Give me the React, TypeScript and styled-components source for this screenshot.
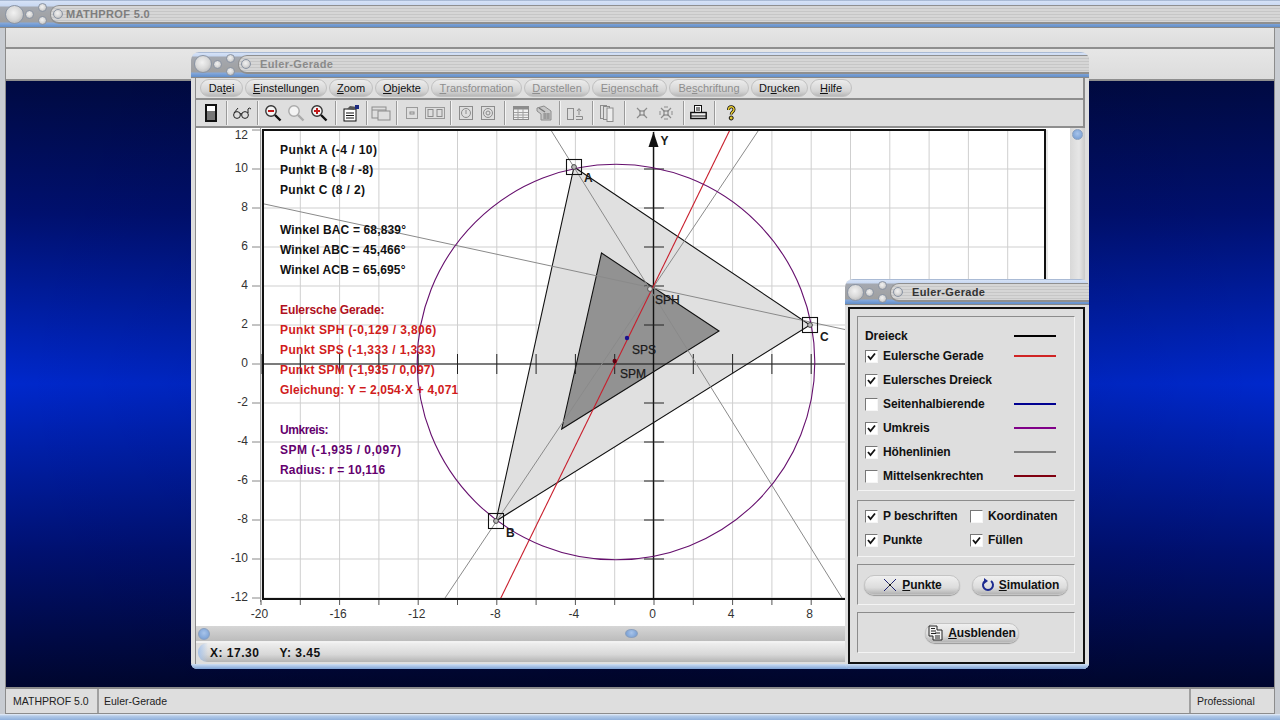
import React from "react";
import styled, { createGlobalStyle } from "styled-components";

const GlobalStyle = createGlobalStyle`
  html, body { margin: 0; padding: 0; background: #000; }
  body { font-family: "Liberation Sans", Arial, sans-serif; color: #000; }
`;

const PX = (x: number) => 654 + x * 19.65;
const PY = (y: number) => 364 - y * 19.5;

const MENU = [
  { pre: "Da", key: "t", post: "ei", w: 43 },
  { pre: "", key: "E", post: "instellungen", w: 82 },
  { pre: "", key: "Z", post: "oom", w: 44 },
  { pre: "", key: "O", post: "bjekte", w: 54 },
  { pre: "", key: "T", post: "ransformation", w: 91, off: true },
  { pre: "", key: "D", post: "arstellen", w: 66, off: true },
  { pre: "Ei", key: "g", post: "enschaft", w: 75, off: true },
  { pre: "Be", key: "s", post: "chriftung", w: 80, off: true },
  { pre: "Dr", key: "u", post: "cken", w: 57 },
  { pre: "", key: "H", post: "ilfe", w: 42 },
];

const Root = styled.div`
  position: relative;
  width: 1280px;
  height: 720px;
  overflow: hidden;
  display: flex;
  flex-direction: column;
  background: #c8ccd2;
`;

const TitleBarBox = styled.div<{ $h: number; $pad: number; $radius: number; $shift: number }>`
  flex: none;
  height: ${p => p.$h}px;
  display: flex;
  align-items: center;
  padding-left: ${p => p.$pad}px;
  border-radius: ${p => p.$radius}px ${p => p.$radius}px 0 0;
  background: linear-gradient(
    to bottom,
    #7d93b4 0,
    #d6e2f6 1px,
    #c8d8f2 ${p => p.$h - 22}px,
    #a4a8b0 ${p => p.$h - 21}px,
    #a0a0a0 ${p => p.$h - 6}px,
    #84a8dc ${p => p.$h - 5}px,
    #628ec8 ${p => p.$h - 1}px,
    #888 ${p => p.$h - 1}px
  );
  & > * { margin-top: ${p => p.$shift}px; }
`;

const Orb = styled.span<{ $size: number }>`
  flex: none;
  display: block;
  width: ${p => p.$size}px;
  height: ${p => p.$size}px;
  border-radius: 50%;
  border: 1px solid #8a94a4;
  box-sizing: border-box;
  background: radial-gradient(circle at 45% 40%, #f2f2f2 0, #d8d8d8 50%, #a8a8a8 100%);
`;

const SmallOrb = styled(Orb)`
  margin-left: 1px;
`;

const OrbPair = styled.span`
  flex: none;
  display: flex;
  flex-direction: column;
  gap: 4px;
  margin: 0 -1px 0 4px;
`;

const Strip = styled.div`
  flex: 1;
  height: 16px;
  margin-left: 4px;
  display: flex;
  align-items: center;
  gap: 3px;
  padding-left: 2px;
  border-radius: 9px 0 0 9px;
  border: 1px solid #8f8f8f;
  border-width: 1px 0 2px 1px;
  background: repeating-linear-gradient(to bottom, #d6d6d6 0, #d6d6d6 2px, #c6c6c6 2px, #c6c6c6 3px);
`;

const StripTitle = styled.span<{ $color: string; $gap: number }>`
  font-size: 11px;
  font-weight: 700;
  letter-spacing: 0.35px;
  white-space: nowrap;
  color: ${p => p.$color};
  margin-left: ${p => p.$gap}px;
`;

const TitleBar = ({ title, color, h, pad, radius, gap, big, shift }: { title: string; color: string; h: number; pad: number; radius: number; gap: number; big: number; shift: number }) => (
  <TitleBarBox $h={h} $pad={pad} $radius={radius} $shift={shift}>
    <Orb $size={big} />
    <SmallOrb $size={9} />
    <OrbPair>
      <Orb $size={9} />
      <Orb $size={9} />
    </OrbPair>
    <Strip>
      <Orb $size={10} />
      <StripTitle $color={color} $gap={gap}>{title}</StripTitle>
    </Strip>
  </TitleBarBox>
);

const Band = styled.div<{ $h: number }>`
  flex: none;
  height: ${p => p.$h}px;
  margin: 0 5px;
  border-left: 1px solid #8c8c8c;
  border-right: 1px solid #8c8c8c;
  border-bottom: 2px solid #8e8e8e;
  background: linear-gradient(to bottom, #e6e6e6, #dcdcdc);
`;

const Desktop = styled.div`
  flex: 1;
  margin: 0 5px;
  border-left: 1px solid #8c8c8c;
  border-right: 1px solid #8c8c8c;
  background:
    linear-gradient(to right, rgba(0, 0, 20, 0) 0, rgba(0, 0, 20, 0.25) 50%, rgba(0, 0, 20, 0) 100%),
    linear-gradient(to bottom, #000a42 0, #001070 22%, #0028cc 50%, #001070 78%, #00062e 100%);
`;

const StatusBar = styled.div`
  flex: none;
  height: 24px;
  margin: 0 5px;
  display: flex;
  border: 1px solid #8c8c8c;
  border-width: 2px 1px 1px;
  background: #dedede;
  font-size: 10.5px;
  color: #222;
`;

const StatusCell = styled.div<{ $w?: number; $pad: number }>`
  ${p => (p.$w ? `width: ${p.$w}px; flex: none;` : "flex: 1;")}
  box-sizing: border-box;
  display: flex;
  align-items: center;
  padding-left: ${p => p.$pad}px;
  & + & { border-left: 2px solid #a0a0a0; }
`;

const BottomEdge = styled.div`
  flex: none;
  height: 6px;
  background: linear-gradient(to bottom, #e8eef8 0, #b4cbe8 2px, #8fb0dc 100%);
`;

const Win = styled.div<{ $l: number; $t: number; $w: number; $h: number }>`
  position: absolute;
  left: ${p => p.$l}px;
  top: ${p => p.$t}px;
  width: ${p => p.$w}px;
  height: ${p => p.$h}px;
  display: flex;
  flex-direction: column;
  box-sizing: border-box;
  background: #dedede;
  border-radius: 8px 8px 6px 6px;
  overflow: hidden;
`;

const WinBody = styled.div`
  flex: 1;
  min-height: 0;
  display: flex;
  flex-direction: column;
  margin: 0 4px;
  border-left: 1px solid #8c8c8c;
  border-right: 2px solid #8c8c8c;
`;

const WinFoot = styled.div`
  flex: none;
  height: 5px;
  background: linear-gradient(to bottom, #cfdff4, #7fa3d6);
`;

const MenuRow = styled.div`
  flex: none;
  height: 20px;
  display: flex;
  align-items: center;
  padding-left: 4px;
  gap: 2px;
  border-bottom: 2px solid #8e8e8e;
  background: #e0e0e0;
`;

const MenuItem = styled.div<{ $w: number; $off?: boolean }>`
  flex: none;
  box-sizing: border-box;
  width: ${p => p.$w}px;
  height: 18px;
  display: flex;
  align-items: center;
  justify-content: center;
  border-radius: 9px;
  border: 1px solid #c0c0c0;
  background: linear-gradient(to bottom, #ececec, #d4d4d4 70%, #b8b8b8);
  font-size: 11px;
  white-space: nowrap;
  color: ${p => (p.$off ? "#8e8e8e" : "#111")};
`;

const ToolRow = styled.div`
  flex: none;
  height: 26px;
  display: flex;
  align-items: center;
  padding-left: 3px;
  border-bottom: 2px solid #8e8e8e;
  background: #dedede;
`;

const Tool = styled.div<{ $w: number }>`
  flex: none;
  width: ${p => p.$w}px;
  height: 22px;
  display: flex;
  align-items: center;
  justify-content: center;
  overflow: visible;
  & svg { flex: none; }
`;

const Sep = styled.div<{ $w: number }>`
  flex: none;
  width: ${p => p.$w}px;
  height: 24px;
  display: flex;
  justify-content: center;
  &::before {
    content: "";
    width: 1px;
    height: 100%;
    background: #9a9a9a;
    box-shadow: 1px 0 0 #f4f4f4;
  }
`;

const WorkRow = styled.div`
  flex: 1;
  min-height: 0;
  display: flex;
  background: #fff;
`;

const Chart = styled.svg`
  flex: none;
  display: block;
  font-family: "Liberation Sans", Arial, sans-serif;
`;

const VScroll = styled.div`
  flex: none;
  width: 15px;
  display: flex;
  justify-content: center;
  padding-top: 1px;
  background: linear-gradient(to right, #d8d8d8, #e6e6e6 60%, #cacaca);
`;

const Knob = styled.span<{ $w: number; $h: number }>`
  flex: none;
  display: block;
  width: ${p => p.$w}px;
  height: ${p => p.$h}px;
  border-radius: 50%;
  border: 1px solid #8aa0bf;
  box-sizing: border-box;
  background: radial-gradient(circle at 50% 40%, #a8c4ea 0, #6f98d0 100%);
`;

const HScroll = styled.div`
  flex: none;
  height: 15px;
  display: flex;
  align-items: center;
  padding-left: 2px;
  background: linear-gradient(to bottom, #d6d6d6, #bcbcbc);
  border-bottom: 2px solid #f2f2f2;
`;

const Spacer = styled.div<{ $w: number }>`
  flex: none;
  width: ${p => p.$w}px;
`;

const CoordBar = styled.div`
  flex: none;
  height: 19px;
  margin: 0 0 2px 2px;
  display: flex;
  align-items: center;
  gap: 20px;
  padding-left: 12px;
  border-radius: 9px 0 0 9px;
  background:
    linear-gradient(to right, #a8c4ea 0, rgba(168, 196, 234, 0) 10px),
    linear-gradient(to bottom, #eeeeee, #d8d8d8 60%, #b4b4b4);
  font-size: 12px;
  font-weight: 700;
  letter-spacing: 0.5px;
  color: #111;
`;

const PanelFrame = styled.div`
  flex: 1;
  min-height: 0;
  margin: 2px 4px 0 3px;
  padding: 7px 8px 6px 7px;
  display: flex;
  flex-direction: column;
  gap: 7px;
  border: 2px solid #111;
  background: #dedede;
`;

const Group = styled.div<{ $h: number }>`
  flex: none;
  box-sizing: border-box;
  height: ${p => p.$h}px;
  border: 1px solid #8c8c8c;
  border-right-color: #f4f4f4;
  border-bottom-color: #f4f4f4;
`;

const CheckList = styled(Group)`
  padding: 10px 0 0 7px;
  margin-bottom: 2px;
  display: flex;
  flex-direction: column;
`;

const CheckLine = styled.div`
  height: 24px;
  display: flex;
  align-items: center;
`;

const HeadLine = styled(CheckLine)`
  height: 17px;
`;

const Label = styled.span`
  width: 131px;
  font-size: 12px;
  font-weight: 700;
  letter-spacing: -0.1px;
  white-space: nowrap;
  color: #111;
`;

const PlainLabel = styled(Label)`
  width: 149px;
`;

const Swatch = styled.span<{ $color: string }>`
  width: 42px;
  height: 2px;
  background: ${p => p.$color};
`;

const Box = styled.span`
  flex: none;
  box-sizing: border-box;
  width: 13px;
  height: 13px;
  margin-right: 5px;
  display: flex;
  align-items: center;
  justify-content: center;
  background: #fff;
  border: 1px solid;
  border-color: #777 #f6f6f6 #f6f6f6 #777;
`;

const OptionGrid = styled(Group)`
  padding: 3px 0 0 7px;
  display: grid;
  grid-template-columns: 105px auto;
  grid-auto-rows: 24px;
  align-items: center;
`;

const Option = styled.div`
  display: flex;
  align-items: center;
  font-size: 12px;
  font-weight: 700;
  letter-spacing: -0.1px;
  white-space: nowrap;
  color: #111;
`;

const ButtonRow = styled(Group)`
  display: flex;
  align-items: center;
  justify-content: space-between;
  padding: 0 6px;
`;

const ButtonCenter = styled(Group)`
  display: flex;
  align-items: center;
  justify-content: center;
  padding-left: 12px;
`;

const Pill = styled.div<{ $w: number }>`
  flex: none;
  box-sizing: border-box;
  width: ${p => p.$w}px;
  height: 20px;
  display: flex;
  align-items: center;
  justify-content: center;
  gap: 4px;
  border-radius: 10px;
  border: 1px solid #c4c4c4;
  box-shadow: 0 1px 1px #999;
  background: linear-gradient(to bottom, #f0f0f0, #dcdcdc 65%, #b4b4b4);
  font-size: 12px;
  font-weight: 700;
  letter-spacing: -0.1px;
  color: #111;
`;

const Svg = ({ w = 18, h = 18, children }: { w?: number; h?: number; children: React.ReactNode }) => (
  <svg width={w} height={h} viewBox={`0 0 ${w} ${h}`} fill="none">{children}</svg>
);

const Lens = ({ color, sign }: { color: string; sign?: "+" | "-" }) => (
  <Svg>
    <circle cx="7" cy="7" r="5.2" fill="#f4f4f4" stroke={color} strokeWidth="1.4" />
    <path d="M11 11 L16.5 16.5" stroke={color === "#aaa" ? "#aaa" : "#111"} strokeWidth="2.4" />
    {sign && <path d={sign === "+" ? "M4 7H10M7 4V10" : "M4 7H10"} stroke="#c01818" strokeWidth="2" />}
  </Svg>
);

const XMark = ({ boxed }: { boxed?: boolean }) => (
  <Svg w={14} h={14}>
    <path d="M2 2 L12 12 M12 2 L2 12" stroke="#8c8c8c" strokeWidth="1.2" />
    {boxed && <path d="M5 1H9M5 13H9M1 5V9M13 5V9" stroke="#8c8c8c" strokeWidth="1" />}
    <rect x="5" y="5" width="4" height="4" fill="#dedede" stroke="#777" />
  </Svg>
);

const TOOLBAR: (number | [number, React.ReactNode])[] = [
  [24, <Svg w={12} h={18}><rect x="1" y="1" width="10" height="16" fill="#777" stroke="#111" strokeWidth="2" /><rect x="2" y="2" width="8" height="5" fill="#fff" /></Svg>],
  6,
  [26, <Svg w={20} h={14}><circle cx="5" cy="9" r="3.4" stroke="#222" /><circle cx="13" cy="9" r="3.4" stroke="#222" /><path d="M8 8 Q9 7 10 8 M2 7 L6 2 M16 7 L16 3 Q17 1 19 3" stroke="#222" /></Svg>],
  4,
  [28, <Lens color="#333" sign="-" />],
  [18, <Lens color="#aaa" />],
  [28, <Lens color="#333" sign="+" />],
  4,
  [28, <Svg><rect x="2" y="5" width="12" height="12" fill="#fff" stroke="#111" /><path d="M4 9H12M4 11.5H12M4 14H12" stroke="#111" /><path d="M5 5 L8 2 L15 3 L12 6Z" fill="#555" /><path d="M13 1H17V5H13Z" fill="#1c2a80" /></Svg>],
  2,
  [28, <Svg w={20} h={16}><rect x="1" y="2" width="14" height="11" stroke="#8c8c8c" /><rect x="7" y="6" width="12" height="9" fill="#dedede" stroke="#8c8c8c" /><path d="M1 5H15" stroke="#8c8c8c" /></Svg>],
  2,
  [30, <Svg w={12} h={12}><rect x="0.5" y="0.5" width="11" height="11" stroke="#9a9a9a" /><rect x="4" y="5" width="4" height="2" stroke="#8c8c8c" /></Svg>],
  [16, <Svg w={20} h={12}><rect x="0.5" y="0.5" width="19" height="11" stroke="#9a9a9a" /><rect x="3" y="2.5" width="5" height="7" stroke="#8c8c8c" /><rect x="12" y="2.5" width="5" height="7" stroke="#8c8c8c" /></Svg>],
  14,
  [18, <Svg w={14} h={14}><rect x="0.5" y="0.5" width="13" height="13" stroke="#8c8c8c" /><circle cx="7" cy="7" r="4.5" stroke="#8c8c8c" /><path d="M7 4V8" stroke="#8c8c8c" /></Svg>],
  [26, <Svg w={14} h={14}><rect x="0.5" y="0.5" width="13" height="13" stroke="#8c8c8c" /><circle cx="7" cy="7" r="4.5" stroke="#8c8c8c" /><circle cx="7" cy="7" r="2" stroke="#8c8c8c" /></Svg>],
  6,
  [28, <Svg w={16} h={14}><rect x="0.5" y="0.5" width="15" height="13" fill="#f0f0f0" stroke="#8c8c8c" /><rect x="1" y="1" width="14" height="2.5" fill="#8c8c8c" /><path d="M1 6.5H15M1 9H15M1 11.5H15M5 3V13M10 3V13" stroke="#a0a0a0" /></Svg>],
  [18, <Svg w={16} h={16}><path d="M1 3 L8 1 L15 6 V15 H5 V9 L1 6Z" fill="#c8c8c8" stroke="#8c8c8c" /><path d="M7 9H14M7 11H14M7 13H14M9 8V14M12 8V14" stroke="#8c8c8c" /><path d="M3 3 L9 7" stroke="#777" strokeWidth="1.4" /></Svg>],
  12,
  [20, <Svg w={16} h={14}><rect x="0.5" y="2.5" width="6" height="11" stroke="#8c8c8c" /><path d="M9 13.5H15.5V10.5H9M12 9V3M10 5L12 2.5L14 5" stroke="#8c8c8c" /></Svg>],
  14,
  [16, <Svg w={14} h={17}><rect x="0.5" y="0.5" width="6" height="13" fill="#dedede" stroke="#8c8c8c" /><rect x="3.5" y="1.5" width="6" height="13" fill="#dedede" stroke="#8c8c8c" /><rect x="7" y="3" width="6" height="13.5" fill="#ececec" stroke="#8c8c8c" /></Svg>],
  18,
  [18, <XMark />],
  [30, <XMark boxed />],
  4,
  [26, <Svg w={17} h={16}><rect x="4.5" y="0.5" width="7" height="7" fill="#fff" stroke="#111" /><path d="M6 3H10M6 5H10" stroke="#111" /><rect x="0.8" y="7.5" width="15.4" height="6" fill="#eee" stroke="#111" strokeWidth="1.4" /><path d="M1 11H16" stroke="#111" /></Svg>],
  6,
  [28, <Svg w={10} h={16}><path d="M2.5 5 C2.5 0.8 8 0.8 8 4.6 C8 6.8 5.2 7 5.2 9.4" stroke="#111" strokeWidth="3" /><path d="M2.5 5 C2.5 0.8 8 0.8 8 4.6 C8 6.8 5.2 7 5.2 9.4" stroke="#e4c832" strokeWidth="1.5" /><circle cx="5.2" cy="13" r="2" fill="#e4c832" stroke="#111" /></Svg>],
];

const Check = ({ on }: { on?: boolean }) => (
  <Box>
    {on && (
      <svg width="9" height="9" viewBox="0 0 9 9">
        <path d="M1 4 L3.5 7 L8 1.5" fill="none" stroke="#111" strokeWidth="1.8" />
      </svg>
    )}
  </Box>
);

const RULES = [
  { t: "Eulersche Gerade", on: true, c: "#d02424" },
  { t: "Eulersches Dreieck", on: true },
  { t: "Seitenhalbierende", c: "#000090" },
  { t: "Umkreis", on: true, c: "#800088" },
  { t: "Höhenlinien", on: true, c: "#808080" },
  { t: "Mittelsenkrechten", c: "#800010" },
];

const NOTES: { t: string; y: number; c: string; ls: number }[] = [
  { t: "Punkt A (-4 / 10)", y: 153.6, c: "#111", ls: 0.45 },
  { t: "Punkt B (-8 / -8)", y: 173.6, c: "#111", ls: 0.33 },
  { t: "Punkt C (8 / 2)", y: 193.6, c: "#111", ls: 0.35 },
  { t: "Winkel BAC = 68,839°", y: 233.6, c: "#111", ls: 0.15 },
  { t: "Winkel ABC = 45,466°", y: 253.6, c: "#111", ls: 0.15 },
  { t: "Winkel ACB = 65,695°", y: 273.6, c: "#111", ls: 0.15 },
  { t: "Eulersche Gerade:", y: 313.6, c: "#b01020", ls: -0.1 },
  { t: "Punkt SPH (-0,129 / 3,806)", y: 333.6, c: "#d01c1c", ls: 0.38 },
  { t: "Punkt SPS (-1,333 / 1,333)", y: 353.6, c: "#d01c1c", ls: 0.38 },
  { t: "Punkt SPM (-1,935 / 0,097)", y: 373.6, c: "#d01c1c", ls: 0.27 },
  { t: "Gleichung: Y = 2,054·X + 4,071", y: 393.6, c: "#d01c1c", ls: 0.18 },
  { t: "Umkreis:", y: 433.6, c: "#64006e", ls: -0.4 },
  { t: "SPM (-1,935 / 0,097)", y: 453.6, c: "#64006e", ls: 0.5 },
  { t: "Radius: r = 10,116", y: 473.6, c: "#64006e", ls: 0.2 },
];

const range = (a: number, b: number, s: number) => {
  const out: number[] = [];
  for (let v = a; v <= b; v += s) out.push(v);
  return out;
};

const Marker = ({ x, y }: { x: number; y: number }) => (
  <g>
    <rect x={x - 7.5} y={y - 7.5} width="15" height="15" fill="none" stroke="#111" strokeWidth="1.1" />
    <circle cx={x} cy={y} r="2.4" fill="#bbb" stroke="#444" />
  </g>
);

// chart origin is the top-left of the white area in page coordinates
const Plot = () => (
  <Chart width={874} height={498} viewBox="196 128 874 498">
    <rect x="196" y="128" width="874" height="498" fill="#fff" />
    {range(-20, 20, 2).map(v => (
      <path key={`v${v}`} d={`M${PX(v)} 130V599`} stroke="#cfcfcf" strokeWidth="1" />
    ))}
    {range(-12, 12, 2).map(v => (
      <path key={`h${v}`} d={`M263 ${PY(v)}H1045`} stroke="#cfcfcf" strokeWidth="1" />
    ))}
    <polygon points="574,167 810,325 496,521" fill="#e0e0e0" stroke="#111" strokeWidth="1.1" />
    <polygon points="601.5,253 719,331 561.7,429" fill="#929292" stroke="#111" strokeWidth="1.1" />
    <path d="M653.5 132V599" stroke="#111" strokeWidth="1.4" />
    <path d="M263 364H1045" stroke="#111" strokeWidth="1.2" />
    <polygon points="653.5,132 648.5,147 658.5,147" fill="#111" />
    {range(-20, 20, 2).filter(v => v !== 0).map(v => (
      <path key={`tx${v}`} d={`M${PX(v)} 354V374`} stroke="#222" strokeWidth="1" />
    ))}
    {range(-10, 10, 2).filter(v => v !== 0).map(v => (
      <path key={`ty${v}`} d={`M644 ${PY(v)}H664`} stroke="#222" strokeWidth="1" />
    ))}
    <g stroke="#8a8a8a" strokeWidth="1">
      <path d={`M${PX(-5.25)} 130L${PX(9.6)} 599`} />
      <path d={`M263 ${PY(8.22)}L1045 ${PY(-0.45)}`} />
      <path d={`M${PX(5.33)} 130L${PX(-10.67)} 599`} />
    </g>
    <path d={`M${PX(3.86)} 130L${PX(-7.82)} 599`} stroke="#c81e2c" strokeWidth="1.1" />
    <ellipse cx="616" cy="362" rx="198.8" ry="197.8" fill="none" stroke="#66106e" strokeWidth="1.1" />
    <Marker x={574} y={167} />
    <Marker x={810} y={325} />
    <Marker x={496} y={521} />
    <circle cx="650" cy="289" r="2.4" fill="#ddd" stroke="#555" />
    <circle cx="627" cy="338" r="2.2" fill="#1a1090" />
    <circle cx="614.7" cy="361" r="2.2" fill="#600010" />
    <g fontSize="12" fill="#1a1a1a">
      <g stroke="#1a1a1a" strokeWidth="0.25">
        <text x="655" y="304">SPH</text>
        <text x="632" y="353.6">SPS</text>
        <text x="620" y="377.6">SPM</text>
      </g>
      <text x="584" y="182" fontWeight="700">A</text>
      <text x="506" y="537" fontWeight="700">B</text>
      <text x="820" y="341" fontWeight="700">C</text>
      <text x="660.5" y="145" fontWeight="700">Y</text>
    </g>
    <path d="M263 130H1045V599H263Z" fill="none" stroke="#111" strokeWidth="2" />
    <path d="M260.5 128V602" stroke="#9a9a9a" strokeWidth="1" />
    {range(-12, 12, 2).map(v => (
      <g key={`ly${v}`}>
        <path d={`M252 ${PY(v)}H260`} stroke="#888" />
        <text x="248" y={v === 12 ? 138.5 : PY(v) + 3} fontSize="12" fill="#333" textAnchor="end">{v}</text>
      </g>
    ))}
    {range(-20, 20, 2).map(v => (
      <path key={`bx${v}`} d={`M${PX(v)} 600V605`} stroke="#555" />
    ))}
    {range(-20, 8, 4).map(v => (
      <text key={`lx${v}`} x={PX(v) - 1.5} y="618" fontSize="12" fill="#333" textAnchor="middle">{v}</text>
    ))}
    <g fontSize="12" fontWeight="700">
      {NOTES.map(n => (
        <text key={n.t} x="280" y={n.y} fill={n.c} letterSpacing={n.ls}>{n.t}</text>
      ))}
    </g>
  </Chart>
);

const App = () => (
  <Root>
    <GlobalStyle />
    <TitleBar title="MATHPROF 5.0" color="#7e7e7e" h={28} pad={5} radius={0} gap={0} big={19} shift={0} />
    <Band $h={19} />
    <Band $h={30} />
    <Desktop />
    <StatusBar>
      <StatusCell $w={91} $pad={7}>MATHPROF 5.0</StatusCell>
      <StatusCell $pad={5}>Euler-Gerade</StatusCell>
      <StatusCell $w={85} $pad={6}>Professional</StatusCell>
    </StatusBar>
    <BottomEdge />

    <Win $l={191} $t={52} $w={898} $h={617}>
      <TitleBar title="Euler-Gerade" color="#8a8a8a" h={26} pad={3} radius={8} gap={6} big={18} shift={-2} />
      <WinBody>
        <MenuRow>
          {MENU.map(m => (
            <MenuItem key={m.post} $w={m.w} $off={m.off}>
              {m.pre}<u>{m.key}</u>{m.post}
            </MenuItem>
          ))}
        </MenuRow>
        <ToolRow>
          {TOOLBAR.map((t, i) =>
            typeof t === "number" ? <Sep key={i} $w={t} /> : <Tool key={i} $w={t[0]}>{t[1]}</Tool>
          )}
        </ToolRow>
        <WorkRow>
          <Plot />
          <VScroll><Knob $w={11} $h={11} /></VScroll>
        </WorkRow>
        <HScroll>
          <Knob $w={12} $h={12} />
          <Spacer $w={415} />
          <Knob $w={13} $h={9} />
        </HScroll>
        <CoordBar>
          <span>X: 17.30</span>
          <span>Y: 3.45</span>
        </CoordBar>
      </WinBody>
      <WinFoot />
    </Win>

    <Win $l={845} $t={279} $w={244} $h={390}>
      <TitleBar title="Euler-Gerade" color="#333" h={26} pad={2} radius={8} gap={6} big={17} shift={0} />
      <PanelFrame>
        <CheckList $h={175}>
          <HeadLine>
            <PlainLabel>Dreieck</PlainLabel>
            <Swatch $color="#000" />
          </HeadLine>
          {RULES.map(r => (
            <CheckLine key={r.t}>
              <Check on={r.on} />
              <Label>{r.t}</Label>
              {r.c && <Swatch $color={r.c} />}
            </CheckLine>
          ))}
        </CheckList>
        <OptionGrid $h={57}>
          <Option><Check on />P beschriften</Option>
          <Option><Check />Koordinaten</Option>
          <Option><Check on />Punkte</Option>
          <Option><Check on />Füllen</Option>
        </OptionGrid>
        <ButtonRow $h={41}>
          <Pill $w={96}>
            <svg width="16" height="16" viewBox="0 0 16 16">
              <path d="M2 2 L6.5 6.5 M14 2 L9.5 6.5 M2 14 L6.5 9.5 M14 14 L9.5 9.5" stroke="#1c2070" fill="none" />
              <path d="M6.5 6.5 L9.5 9.5 M9.5 6.5 L6.5 9.5" stroke="#111" />
            </svg>
            <span><u>P</u>unkte</span>
          </Pill>
          <Pill $w={96}>
            <svg width="14" height="14" viewBox="0 0 14 14">
              <path d="M4 3 A5 5 0 1 0 10 3" fill="none" stroke="#1c2a90" strokeWidth="2" />
              <path d="M3 0 L7 3 L3 6Z" fill="#1c2a90" />
            </svg>
            <span><u>S</u>imulation</span>
          </Pill>
        </ButtonRow>
        <ButtonCenter $h={41}>
          <Pill $w={94}>
            <svg width="16" height="16" viewBox="0 0 16 16">
              <path d="M1 1H9V5H14V15H5V11H1Z" fill="#f4f4f4" stroke="#222" />
              <path d="M3 3.5H7M3 6H8M3 8.5H8M7 8H12M7 11H12M7 13H12" stroke="#222" />
            </svg>
            <span><u>A</u>usblenden</span>
          </Pill>
        </ButtonCenter>
      </PanelFrame>
      <WinFoot />
    </Win>
  </Root>
);

export default App;
